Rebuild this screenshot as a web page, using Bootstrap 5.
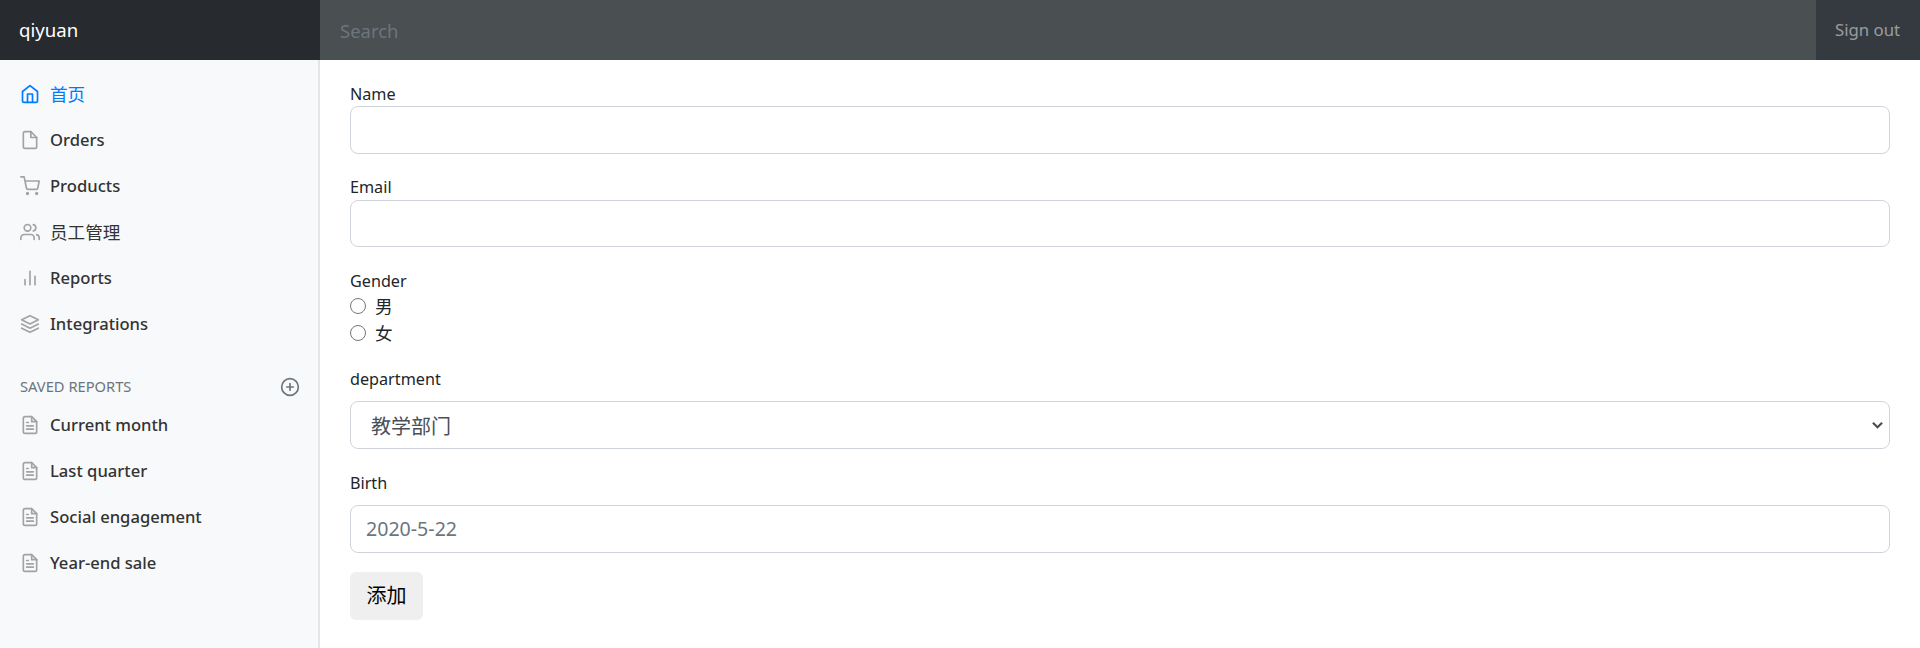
<!DOCTYPE html>
<html lang="zh">
<head>
  <meta charset="utf-8">
  <title>qiyuan</title>
  <meta name="viewport" content="width=device-width, initial-scale=1">
  <link href="https://cdn.jsdelivr.net/npm/bootstrap@5.3.0/dist/css/bootstrap.min.css" rel="stylesheet">
  <style>
    body {
      font-family: "Noto Sans", "Noto Sans CJK SC", sans-serif;
      font-size: 16.2px;
      line-height: 26.4px;
      color: #212529;
      min-height: 648px;
    }
    .cjk-text { font-size: 17.6px; font-weight: 400; }
    .topbar { height: 60px; background: #343a40; }
    .topbar-brand {
      width: 320px;
      padding-left: 19px;
      background: #272b30;
      color: #fff;
      font-size: 18.6px;
      line-height: 60px;
      text-decoration: none;
    }
    .topbar-search {
      border: 0;
      border-radius: 0;
      height: 60px;
      padding: 0 20px;
      font-size: 18.5px;
      color: #fff;
      background: #4a4f52;
    }
    .topbar-search::placeholder { color: #6c757d; }
    .topbar-search:focus { background: #4a4f52; box-shadow: none; color: #fff; }
    .signout-link {
      width: 104px;
      padding-left: 19px;
      font-size: 16.8px;
      line-height: 60px;
      color: rgba(255, 255, 255, .5);
      text-decoration: none;
    }
    .side-panel {
      min-height: 588px;
      padding-top: 11px;
      background: #f8f9fa;
      box-shadow: inset -2px 0 0 #e3e5e7;
    }
    .side-panel .nav-link {
      display: flex;
      align-items: center;
      height: 46px;
      padding: 0 20px;
      font-size: 16.6px;
      color: #333;
      font-weight: 500;
    }
    .side-panel .nav-link.active { color: #007bff; }
    .side-panel .nav-link svg { color: #a3a3a3; }
    .side-panel .nav-link.active svg { color: #007bff; }
    .feather {
      width: 20px;
      height: 20px;
      margin-right: 10px;
      flex: none;
      fill: none;
      stroke: currentColor;
      stroke-width: 2;
      stroke-linecap: round;
      stroke-linejoin: round;
    }
    .side-heading {
      margin: 28px 20px 3px;
      height: 24px;
      font-size: 14.7px;
      color: #6c757d;
      text-transform: uppercase;
    }
    .side-heading .feather { margin-right: 0; color: #6c757d; }
    .main-area { padding: 19.6px 30px 0; }
    .form-block { margin-bottom: 19.6px; }
    .form-block.radio-block { margin-bottom: 19px; }
    .form-block.select-block { margin-bottom: 21.1px; }
    .form-block label.plain { display: block; margin-bottom: 0; padding-top: 2px; line-height: 24.4px; }
    .form-block label.spaced { display: block; margin-bottom: 8.5px; }
    .form-block label.spaced.birth-label { margin-bottom: 8.4px; }
    .form-control, .form-select { border-color: #ced4da; }
    .form-control.form-control-lg { height: 47.6px; min-height: 0; padding-left: 15px; font-size: 19.6px; }
    .form-control::placeholder { color: #6c757d; }
    .form-select.form-select-lg {
      height: 48px;
      padding-top: 10px;
      padding-bottom: 6px;
      padding-left: 20px;
      color: #495057;
      background-image: url("data:image/svg+xml,%3Csvg xmlns='http://www.w3.org/2000/svg' viewBox='0 0 12 8'%3E%3Cpath fill='none' stroke='%23495057' stroke-width='2.4' d='M1 1.5l5 5 5-5'/%3E%3C/svg%3E");
      background-position: right 6px center;
      background-size: 11px 8px;
    }
    .radio-row { min-height: 26px; margin: 0; padding-left: 25px; line-height: 26px; }
    .radio-row .form-check-input { margin-top: 5px; margin-left: -25px; border-color: #767676; }
    .add-btn {
      width: 73px;
      height: 48px;
      padding: 0;
      font-size: 20px;
      color: #000;
      background: #efefef;
      border: 0;
    }
  </style>
</head>
<body>

<!-- Top bar -->
<nav class="topbar d-flex align-items-stretch">
  <a class="topbar-brand" href="#">qiyuan</a>
  <input class="form-control topbar-search flex-grow-1 w-auto" type="text" placeholder="Search">
  <a class="signout-link" href="#">Sign out</a>
</nav>

<div class="container-fluid px-0">
  <div class="row g-0">

    <!-- Sidebar -->
    <div class="col-2 side-panel">
      <ul class="nav flex-column">
        <li class="nav-item">
          <a class="nav-link active" href="#">
            <svg class="feather" viewBox="0 0 24 24"><path d="M3 9l9-7 9 7v11a2 2 0 0 1-2 2H5a2 2 0 0 1-2-2z"/><polyline points="9 22 9 12 15 12 15 22"/></svg>
            <span class="cjk-text">首页</span>
          </a>
        </li>
        <li class="nav-item">
          <a class="nav-link" href="#">
            <svg class="feather" viewBox="0 0 24 24"><path d="M13 2H6a2 2 0 0 0-2 2v16a2 2 0 0 0 2 2h12a2 2 0 0 0 2-2V9z"/><polyline points="13 2 13 9 20 9"/></svg>
            Orders
          </a>
        </li>
        <li class="nav-item">
          <a class="nav-link" href="#">
            <svg class="feather" viewBox="0 0 24 24"><circle cx="9" cy="21" r="1"/><circle cx="20" cy="21" r="1"/><path d="M1 1h4l2.68 13.39a2 2 0 0 0 2 1.61h9.72a2 2 0 0 0 2-1.61L23 6H6"/></svg>
            Products
          </a>
        </li>
        <li class="nav-item">
          <a class="nav-link" href="#">
            <svg class="feather" viewBox="0 0 24 24"><path d="M17 21v-2a4 4 0 0 0-4-4H5a4 4 0 0 0-4 4v2"/><circle cx="9" cy="7" r="4"/><path d="M23 21v-2a4 4 0 0 0-3-3.87"/><path d="M16 3.13a4 4 0 0 1 0 7.75"/></svg>
            <span class="cjk-text">员工管理</span>
          </a>
        </li>
        <li class="nav-item">
          <a class="nav-link" href="#">
            <svg class="feather" viewBox="0 0 24 24"><line x1="18" y1="20" x2="18" y2="10"/><line x1="12" y1="20" x2="12" y2="4"/><line x1="6" y1="20" x2="6" y2="14"/></svg>
            Reports
          </a>
        </li>
        <li class="nav-item">
          <a class="nav-link" href="#">
            <svg class="feather" viewBox="0 0 24 24"><polygon points="12 2 2 7 12 12 22 7 12 2"/><polyline points="2 17 12 22 22 17"/><polyline points="2 12 12 17 22 12"/></svg>
            Integrations
          </a>
        </li>
      </ul>

      <h6 class="side-heading d-flex justify-content-between align-items-center fw-normal">
        <span>Saved reports</span>
        <svg class="feather" viewBox="0 0 24 24"><circle cx="12" cy="12" r="10"/><line x1="12" y1="8" x2="12" y2="16"/><line x1="8" y1="12" x2="16" y2="12"/></svg>
      </h6>

      <ul class="nav flex-column">
        <li class="nav-item">
          <a class="nav-link" href="#">
            <svg class="feather" viewBox="0 0 24 24"><path d="M14 2H6a2 2 0 0 0-2 2v16a2 2 0 0 0 2 2h12a2 2 0 0 0 2-2V8z"/><polyline points="14 2 14 8 20 8"/><line x1="16" y1="13" x2="8" y2="13"/><line x1="16" y1="17" x2="8" y2="17"/><polyline points="10 9 9 9 8 9"/></svg>
            Current month
          </a>
        </li>
        <li class="nav-item">
          <a class="nav-link" href="#">
            <svg class="feather" viewBox="0 0 24 24"><path d="M14 2H6a2 2 0 0 0-2 2v16a2 2 0 0 0 2 2h12a2 2 0 0 0 2-2V8z"/><polyline points="14 2 14 8 20 8"/><line x1="16" y1="13" x2="8" y2="13"/><line x1="16" y1="17" x2="8" y2="17"/><polyline points="10 9 9 9 8 9"/></svg>
            Last quarter
          </a>
        </li>
        <li class="nav-item">
          <a class="nav-link" href="#">
            <svg class="feather" viewBox="0 0 24 24"><path d="M14 2H6a2 2 0 0 0-2 2v16a2 2 0 0 0 2 2h12a2 2 0 0 0 2-2V8z"/><polyline points="14 2 14 8 20 8"/><line x1="16" y1="13" x2="8" y2="13"/><line x1="16" y1="17" x2="8" y2="17"/><polyline points="10 9 9 9 8 9"/></svg>
            Social engagement
          </a>
        </li>
        <li class="nav-item">
          <a class="nav-link" href="#">
            <svg class="feather" viewBox="0 0 24 24"><path d="M14 2H6a2 2 0 0 0-2 2v16a2 2 0 0 0 2 2h12a2 2 0 0 0 2-2V8z"/><polyline points="14 2 14 8 20 8"/><line x1="16" y1="13" x2="8" y2="13"/><line x1="16" y1="17" x2="8" y2="17"/><polyline points="10 9 9 9 8 9"/></svg>
            Year-end sale
          </a>
        </li>
      </ul>
    </div>

    <!-- Form -->
    <main class="col-10 main-area">
      <form>
        <div class="form-block">
          <label class="plain" for="empName">Name</label>
          <input class="form-control form-control-lg" id="empName" type="text">
        </div>
        <div class="form-block">
          <label class="plain" for="empEmail">Email</label>
          <input class="form-control form-control-lg" id="empEmail" type="text">
        </div>
        <div class="form-block radio-block">
          <label class="plain">Gender</label>
          <div class="form-check radio-row">
            <input class="form-check-input" type="radio" name="gender" id="genderM">
            <label class="form-check-label cjk-text" for="genderM">男</label>
          </div>
          <div class="form-check radio-row">
            <input class="form-check-input" type="radio" name="gender" id="genderF">
            <label class="form-check-label cjk-text" for="genderF">女</label>
          </div>
        </div>
        <div class="form-block select-block">
          <label class="spaced" for="empDept">department</label>
          <select class="form-select form-select-lg" id="empDept">
            <option>教学部门</option>
          </select>
        </div>
        <div class="form-block">
          <label class="spaced birth-label" for="empBirth">Birth</label>
          <input class="form-control form-control-lg" id="empBirth" type="text" placeholder="2020-5-22">
        </div>
        <button class="btn add-btn" type="button">添加</button>
      </form>
    </main>

  </div>
</div>

<script src="https://cdn.jsdelivr.net/npm/bootstrap@5.3.0/dist/js/bootstrap.bundle.min.js"></script>
</body>
</html>
